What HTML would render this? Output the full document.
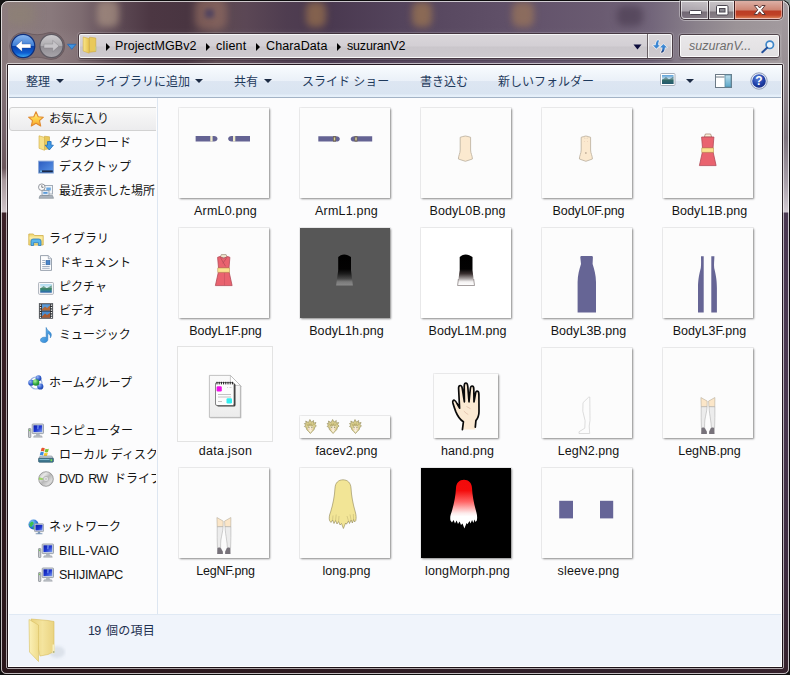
<!DOCTYPE html>
<html lang="ja">
<head>
<meta charset="utf-8">
<title>suzuranV2</title>
<style>
*{box-sizing:border-box;margin:0;padding:0}
html,body{width:790px;height:675px;overflow:hidden;background:#141414}
body{font-family:"Liberation Sans","Noto Sans CJK JP",sans-serif;font-size:12px;color:#000;position:relative}
.a{position:absolute}
.l{font-size:12.5px}
#win{position:absolute;left:0;top:0;width:790px;height:675px;overflow:hidden}
/* ---- glass frame ---- */
#glass{position:absolute;left:1px;top:1px;width:788px;height:673px;border-radius:7px 7px 5px 5px;overflow:hidden;box-shadow:0 0 0 1px #0c0c0c;
 background:linear-gradient(90deg,#8c7c7e 0,#89797c 50px,#7d6b70 80px,#66525c 105px,#594550 125px,#4c3743 150px,#493541 185px,#5d4951 215px,#5b4755 245px,#4f3d50 285px,#4a3950 330px,#54445c 400px,#5c4c64 470px,#64546c 540px,#6a5b71 600px,#72657a 650px,#8a818b 695px,#9b9397 735px,#a39b9f 100%)}
#glass .v{position:absolute;left:0;top:0;width:788px;height:64px;background:linear-gradient(180deg,rgba(255,255,255,0) 0,rgba(255,255,255,0) 26px,rgba(255,255,255,.05) 40px,rgba(255,255,255,.03) 100%)}
.blob{position:absolute;border-radius:30%;filter:blur(3.5px)}
.hl{position:absolute;background:rgba(255,255,255,.78)}
.dk{position:absolute;background:rgba(20,10,16,.72)}
/* caption buttons */
.cb{position:absolute;top:1px;height:19px;border:1px solid rgba(40,30,36,.75);border-top:none}
.cb i{position:absolute;left:0;top:0;right:0;bottom:0;border:1px solid rgba(255,255,255,.55);border-top:none;
 background:linear-gradient(180deg,rgba(255,255,255,.50) 0,rgba(255,255,255,.30) 10px,rgba(40,30,40,.20) 11px,rgba(60,50,60,.10) 100%)}
/* address */
.box{position:absolute;border:1px solid rgba(60,46,54,.8);border-radius:3px;box-shadow:0 0 0 1px rgba(255,255,255,.16),0 2px 2px rgba(20,8,16,.22)}
.box>i{position:absolute;left:0;top:0;right:0;bottom:0;border:1px solid rgba(255,255,255,.8);border-radius:2px;
 background:linear-gradient(180deg,#dad6da 0,#d3cfd4 11px,#cac6cb 12px,#cecacf 100%)}
.crumb{position:absolute;top:36.500px;height:18px;line-height:18px;font-size:12.5px;white-space:nowrap;color:#000}
.tri{position:absolute;width:0;height:0;border-top:4px solid transparent;border-bottom:4px solid transparent;border-left:4px solid #000}
/* ---- client ---- */
#client{position:absolute;left:8px;top:65px;width:774px;height:602px;background:#fcfcfd;overflow:hidden}
#edge{position:absolute;left:0;top:0;width:774px;height:602px;box-shadow:inset 1px 0 0 #fff,inset -1px 0 0 #fff,inset 0 -1px 0 #fff;pointer-events:none}
#toolbar{position:absolute;left:0;top:0;width:774px;height:33px;
 background:linear-gradient(180deg,#fdfeff 0,#f5f9fd 4px,#eaf0f8 16px,#dde6f2 16px,#d9e4f1 29px,#e4eef9 30px,#e6f0fa 32px,#a3b3c6 32px,#a3b3c6 33px);color:#1e395b}
.tb{position:absolute;top:8px;height:18px;line-height:18px;white-space:nowrap;font-size:12px;color:#1e395b}
.arr{position:absolute;top:14px;width:0;height:0;border-left:4px solid transparent;border-right:4px solid transparent;border-top:4px solid #1c2b44}
#nav{position:absolute;left:0;top:33px;width:148px;height:515px;background:#fcfcfd;overflow:hidden}
#navdiv{position:absolute;left:149px;top:33px;width:1px;height:516px;background:#dde6f1}
.ni{position:absolute;height:24px;line-height:25px;white-space:nowrap;font-size:12px;color:#141414}
.ic{position:absolute;width:16px;height:16px;overflow:visible}
#sel{position:absolute;left:1px;top:42px;width:160px;height:24px;border:1px solid #d2d2d2;border-radius:3px;background:linear-gradient(180deg,#f9f9f9 0,#ececee 100%)}
#details{position:absolute;left:0;top:549px;width:774px;height:53px;background:#f0f4fb;border-top:1px solid #e0e9f4}
/* ---- items ---- */
.th{position:absolute;background:#fcfcfc;box-shadow:0 0 0 1px rgba(0,0,0,.05),1px 1px 2px rgba(0,0,0,.42)}
.th svg{position:absolute;left:0;top:0}
.lb{position:absolute;width:131px;text-align:center;font-size:12.5px;line-height:16px;white-space:nowrap;color:#141414}
</style>
</head>
<body>
<div id="win">
<!-- ===== glass frame ===== -->
<div id="corner" class="a" style="left:783px;top:0;width:7px;height:8px;background:#8a9a97"></div>
<div id="glass"><div class="v"></div>
 <div class="blob" style="left:4px;top:2px;width:30px;height:22px;background:rgba(150,150,90,.2);filter:blur(6px)"></div>
 <div class="blob" style="left:96px;top:-1px;width:22px;height:27px;background:rgba(200,175,150,.5)"></div>
 <div class="blob" style="left:194px;top:-3px;width:32px;height:32px;background:rgba(170,125,105,.45)"></div>
 <div class="blob" style="left:204px;top:8px;width:9px;height:9px;background:rgba(50,50,100,.55);filter:blur(2px)"></div>
 <div class="blob" style="left:305px;top:1px;width:20px;height:25px;background:rgba(185,135,75,.5)"></div>
 <div class="blob" style="left:411px;top:1px;width:20px;height:25px;background:rgba(190,140,75,.5)"></div>
 <div class="blob" style="left:511px;top:1px;width:22px;height:25px;background:rgba(190,140,80,.45)"></div>
 <div class="blob" style="left:616px;top:5px;width:26px;height:20px;background:rgba(50,35,55,.38)"></div>
</div>
<!-- side / bottom glass strips -->
<div class="a" style="left:1px;top:8px;width:7px;height:660px;background:linear-gradient(180deg,#8c7c7e 0,#88787b 60px,#75636a 125px,#6b565b 160px,#a8989c 172px,#cfc4c8 204px,#3c2228 205px,#3a2026 300px,#2e1a1e 500px,#2a171b 100%)"></div>
<div class="a" style="left:782px;top:8px;width:7px;height:660px;background:linear-gradient(180deg,#a39b9f 0,#9a9196 50px,#7e747e 130px,#a9a0aa 175px,#d2cad2 204px,#4b3952 205px,#4a3850 400px,#3e2c40 560px,#36222c 100%)"></div>
<div class="a" style="left:1px;top:667px;width:788px;height:7px;border-radius:0 0 5px 5px;background:linear-gradient(90deg,#2a171b 0,#2c191f 300px,#30202a 600px,#36222c 100%)"></div>
<!-- outer highlight lines -->
<div class="a" style="left:1px;top:1px;width:788px;height:673px;border:1px solid rgba(255,255,255,.7);border-radius:7px 7px 5px 5px"></div>
<!-- inner edge of frame -->
<div class="a" style="left:6px;top:63px;width:778px;height:606px;border:1px solid rgba(255,255,255,.62);border-radius:2px"></div>
<div class="a" style="left:7px;top:64px;width:776px;height:604px;border:1px solid rgba(26,16,22,.85);border-radius:1px"></div>

<!-- caption buttons -->
<div class="a" style="left:680px;top:1px;width:103px;height:19px;border-radius:0 0 5px 5px;box-shadow:0 0 0 1px rgba(255,255,255,.35)"></div>
<div class="cb" style="left:680px;width:29px;border-radius:0 0 0 5px"><i style="border-radius:0 0 0 4px"></i>
 <svg class="a" style="left:8px;top:9px" width="14" height="6"><rect x=".5" y=".5" width="12" height="4" rx="1" fill="#fff" stroke="#4a4650"/></svg></div>
<div class="cb" style="left:708px;width:27px"><i></i>
 <svg class="a" style="left:7px;top:4px" width="14" height="12"><rect x=".5" y=".5" width="11.500" height="9.500" rx="1.200" fill="#fff" stroke="#4a4650"/><rect x="3.500" y="3.500" width="5.500" height="3.500" fill="#8a8890" stroke="#4a4650"/></svg></div>
<div class="cb" style="left:734px;width:49px;border-radius:0 0 5px 0;border-color:rgba(60,20,20,.8)"><i style="border-radius:0 0 4px 0;border-color:rgba(255,200,190,.6);background:linear-gradient(180deg,#dcb0a6 0,#cd8573 9px,#bb3c24 10px,#c04226 14px,#d87a52 100%)"></i>
 <svg class="a" style="left:17px;top:3px" width="16" height="13" viewBox="0 0 16 13"><path d="M2.300 1.500h3.200L7.700 4l2.200-2.500h3.200L9.600 5.800l3.700 4.700h-3.300L7.700 7.700 5.400 10.500H2.100l3.700-4.700z" fill="#fff" stroke="#5a3a3a" stroke-width="1" stroke-linejoin="round"/></svg></div>

<!-- back / forward -->
<svg class="a" style="left:6px;top:30px" width="74" height="34" viewBox="0 0 74 34">
 <defs>
  <linearGradient id="gb1" x1="0" y1="0" x2="0" y2="1"><stop offset="0" stop-color="#8cb8ee"/><stop offset=".48" stop-color="#3f7fd6"/><stop offset=".5" stop-color="#0b3fa8"/><stop offset=".8" stop-color="#0d5ed2"/><stop offset="1" stop-color="#3fb4f6"/></linearGradient>
  <linearGradient id="gf1" x1="0" y1="0" x2="0" y2="1"><stop offset="0" stop-color="#cfcdd0"/><stop offset=".48" stop-color="#aeacb0"/><stop offset=".5" stop-color="#8f8c92"/><stop offset="1" stop-color="#a9a6ac"/></linearGradient>
 </defs>
 <path d="M17.2 2.5c5 0 7.500 2.200 14 2.200s9-2.200 14-2.200a13.500 13.500 0 0 1 0 27c-5 0-7.500-2.200-14-2.200s-9 2.200-14 2.200a13.500 13.500 0 0 1 0-27z" fill="rgba(70,52,60,.22)" stroke="rgba(50,36,44,.28)"/>
 <circle cx="17.200" cy="16" r="11.600" fill="url(#gb1)" stroke="#0d2f7c" stroke-width="1.200"/>
 <path d="M9.800 16l6.300-5.600v3.700h8.700v3.800h-8.700v3.700z" fill="#fff" stroke="rgba(20,50,120,.45)" stroke-width=".6" stroke-linejoin="round"/>
 <circle cx="45.500" cy="16" r="11.600" fill="url(#gf1)" stroke="#5e5a62" stroke-width="1.200"/>
 <path d="M53 16l-6.300-5.600v3.700h-8.700v3.800h8.700v3.700z" fill="#c6c4c8" stroke="rgba(110,106,114,.5)" stroke-width=".6" stroke-linejoin="round"/>
 <path d="M61.500 14.300h8.500l-4.250 5z" fill="#3f93e0" stroke="#2468b8" stroke-width=".8"/>
</svg>

<!-- address bar -->
<div class="box" style="left:78px;top:33px;width:595px;height:26px"><i></i></div>
<div class="a" style="left:647px;top:34px;width:1px;height:24px;background:rgba(70,60,66,.75)"></div>
<div class="a" style="left:648px;top:35px;width:1px;height:22px;background:rgba(255,255,255,.7)"></div>
<svg class="a" style="left:82px;top:36px" width="16" height="18" viewBox="0 0 16 18">
 <defs><linearGradient id="fy" x1="0" y1="0" x2="1" y2="0"><stop offset="0" stop-color="#f9e58a"/><stop offset="1" stop-color="#e6c24e"/></linearGradient></defs>
 <path d="M7.500 1.200l6.300.8v13.500l-6.300.7z" fill="#e9c95a" stroke="#caa640" stroke-width=".6"/>
 <path d="M1.200 1l6 1.600v14.600l-6-2.200z" fill="url(#fy)" stroke="#d4b044" stroke-width=".6"/>
 <path d="M13 10.500h1.200v4.300H13z" fill="#c8cc78"/>
</svg>
<div class="tri" style="left:106px;top:43px"></div>
<div class="crumb" style="left:115px;letter-spacing:0.08px">ProjectMGBv2</div>
<div class="tri" style="left:206px;top:43px"></div>
<div class="crumb" style="left:216px;letter-spacing:0.2px">client</div>
<div class="tri" style="left:256px;top:43px"></div>
<div class="crumb" style="left:266px;letter-spacing:0.12px">CharaData</div>
<div class="tri" style="left:337px;top:43px"></div>
<div class="crumb" style="left:347px;letter-spacing:-0.17px">suzuranV2</div>
<svg class="a" style="left:633px;top:44px" width="10" height="6"><path d="M.5.500h8l-4 5z" fill="#0c0c3c"/></svg>
<svg class="a" style="left:652px;top:39px" width="16" height="15" viewBox="0 0 16 15">
 <defs><linearGradient id="rf" x1="0" y1="0" x2="0" y2="1"><stop offset="0" stop-color="#4a96dc"/><stop offset=".6" stop-color="#2f74c4"/><stop offset="1" stop-color="#16265e"/></linearGradient></defs>
 <g stroke="rgba(255,255,255,.75)" stroke-width="1.300" stroke-linejoin="round" fill="rgba(255,255,255,.75)">
  <path d="M1 6.200H7.800L4.400 9.800zM3.600 6.300C3.800 4 4.500 2 5.600 1.200L7.200 1.600C6.400 2.600 6.200 4.500 6.300 6.300z"/>
  <path d="M11.400 5.100L15 8.500H8zM10.400 8.400C10.400 10.500 10 12.300 8.600 13.300L10 13.800C11.800 13 12.800 11 12.900 8.400z"/>
 </g>
 <path d="M1 6.200H7.800L4.400 9.800zM3.600 6.300C3.800 4 4.500 2 5.600 1.200L7.200 1.600C6.400 2.600 6.200 4.500 6.300 6.300z" fill="#3c86d2"/>
 <path d="M11.400 5.100L15 8.500H8zM10.400 8.400C10.400 10.500 10 12.300 8.600 13.300L10 13.800C11.800 13 12.800 11 12.900 8.400z" fill="url(#rf)"/>
</svg>
<!-- search box -->
<div class="box" style="left:679px;top:34px;width:101px;height:24px"><i style="background:linear-gradient(180deg,#e9e7e9 0,#e2e0e2 100%)"></i></div>
<div class="a l" style="left:689px;top:37px;height:18px;line-height:18px;font-style:italic;color:#6d6d6d;white-space:nowrap">suzuranV...</div>
<svg class="a" style="left:760px;top:39px" width="16" height="16" viewBox="0 0 16 16">
 <circle cx="9.800" cy="5.800" r="3.700" fill="#eef4fb" stroke="#3f86c8" stroke-width="1.700"/>
 <path d="M7 8.700L2.300 13.300" stroke="#24509a" stroke-width="2" stroke-linecap="round"/>
</svg>
<div id="client">
<!-- ===== command bar (coords relative to client: x-8, y-65) ===== -->
<div id="toolbar">
 <div class="tb" style="left:18px">整理</div><div class="arr" style="left:48px"></div>
 <div class="tb" style="left:86px">ライブラリに追加</div><div class="arr" style="left:187px"></div>
 <div class="tb" style="left:226px">共有</div><div class="arr" style="left:256px"></div>
 <div class="tb" style="left:294px">スライド ショー</div>
 <div class="tb" style="left:412px">書き込む</div>
 <div class="tb" style="left:490px">新しいフォルダー</div>
 <!-- view icon -->
 <svg class="a" style="left:652px;top:8px" width="16" height="14" viewBox="0 0 16 14">
  <defs><linearGradient id="vw" x1="0" y1="0" x2="0" y2="1"><stop offset="0" stop-color="#5aa0d8"/><stop offset=".45" stop-color="#cfe4ee"/><stop offset=".55" stop-color="#3f7f78"/><stop offset="1" stop-color="#1f5a8a"/></linearGradient></defs>
  <rect x=".5" y=".5" width="14.500" height="12" rx="1" fill="#fff" stroke="#a8b0bc"/>
  <rect x="2" y="2" width="11.500" height="9" fill="url(#vw)"/>
  <path d="M2 7l4-3 3 2.500 4.500-3V11H2z" fill="rgba(40,90,90,.55)"/>
 </svg>
 <div class="arr" style="left:678px"></div>
 <!-- preview pane icon -->
 <svg class="a" style="left:707px;top:8px" width="18" height="16" viewBox="0 0 18 16">
  <defs><linearGradient id="pp" x1="0" y1="0" x2="0" y2="1"><stop offset="0" stop-color="#bfe0ee"/><stop offset="1" stop-color="#5aa6c8"/></linearGradient></defs>
  <rect x=".5" y="1.500" width="16" height="13" fill="#fff" stroke="#6c7a86"/>
  <path d="M.5 4h9" stroke="#6c7a86"/>
  <rect x="10" y="2" width="6" height="12" fill="url(#pp)" stroke="#5a8aa0" stroke-width=".8"/>
 </svg>
 <!-- help icon -->
 <svg class="a" style="left:742px;top:7px" width="18" height="18" viewBox="0 0 18 18">
  <defs><radialGradient id="hp" cx=".4" cy=".3" r=".8"><stop offset="0" stop-color="#5a7fd8"/><stop offset=".6" stop-color="#1f3fa8"/><stop offset="1" stop-color="#14287a"/></radialGradient></defs>
  <circle cx="9" cy="9" r="8.200" fill="#e8eef8" stroke="#7a86a8" stroke-width=".8"/>
  <circle cx="9" cy="9" r="6.800" fill="url(#hp)"/>
  <text x="9" y="13.300" text-anchor="middle" font-family="Liberation Sans,sans-serif" font-weight="bold" font-size="12" fill="#fff">?</text>
 </svg>
</div>
<!-- ===== navigation pane (origin: page 8,97) ===== -->
<div id="nav">
<div id="sel" style="left:1px;top:9px"></div>
<svg class="ic" style="left:20px;top:13px" viewBox="0 0 16 16"><defs><linearGradient id="st" x1="0" y1="0" x2="0" y2="1"><stop offset="0" stop-color="#fff3a0"/><stop offset=".5" stop-color="#ffd24a"/><stop offset="1" stop-color="#f6a42c"/></linearGradient></defs><path d="M8 .8l2.200 4.900 5.200.5-3.900 3.500 1.200 5.300L8 12.300 3.300 15l1.200-5.300L.6 6.200l5.200-.5z" fill="url(#st)" stroke="#e08a30" stroke-width="1.100" stroke-linejoin="round"/></svg>
<div class="ni" style="left:41px;top:9px">お気に入り</div>
<svg class="ic" style="left:30px;top:37px" viewBox="0 0 16 16"><path d="M6.500 1.200l5 .6v12l-5 .8z" fill="#e8c85a" stroke="#c8a43c" stroke-width=".6"/><path d="M1 .8l5.500 1.500v13l-5.500-2z" fill="#f6e08a" stroke="#d0ac44" stroke-width=".6"/><path d="M9.500 6.500h3.600v3.700h2.300l-4.100 4.800-4.100-4.800h2.300z" fill="#3f9ae8" stroke="#1f6ab8" stroke-width=".8" stroke-linejoin="round"/></svg>
<div class="ni" style="left:51px;top:33px">ダウンロード</div>
<svg class="ic" style="left:30px;top:61px" viewBox="0 0 16 16"><defs><linearGradient id="dk" x1="0" y1="0" x2="1" y2="1"><stop offset="0" stop-color="#2c5cc0"/><stop offset="1" stop-color="#5a96e8"/></linearGradient></defs><rect x=".6" y="2.100" width="14.800" height="12" fill="url(#dk)" stroke="#8aa8d8" stroke-width=".9"/><rect x="1.200" y="11.400" width="13.600" height="1.900" fill="#1a2a4a"/><rect x="1.600" y="11.300" width="2.400" height="1.900" fill="#6ab0e8"/></svg>
<div class="ni" style="left:51px;top:57px">デスクトップ</div>
<svg class="ic" style="left:30px;top:85px" viewBox="0 0 16 16"><rect x="6.500" y="2.500" width="8" height="8.500" fill="#f2f5f9" stroke="#9aa4b0" stroke-width=".9"/><rect x="8.300" y="4.500" width="4.500" height="3" fill="#6aa8e0"/><rect x="4" y="7.500" width="7" height="5" fill="#dfe8f2" stroke="#8a98a8" stroke-width=".8"/><rect x="5.300" y="9" width="4.200" height="1.800" fill="#5a9ad8"/><path d="M2 12.500h12.500l1 2.800H1z" fill="#aab2bc" stroke="#7c8690" stroke-width=".6"/><circle cx="3.800" cy="4.200" r="3.300" fill="#fafafa" stroke="#8a8e96" stroke-width=".9"/><path d="M3.800 2.200v2.100h1.700" stroke="#5a5e66" stroke-width=".8" fill="none"/></svg>
<div class="ni" style="left:51px;top:81px">最近表示した場所</div>
<svg class="ic" style="left:20px;top:133px" viewBox="0 0 16 16"><path d="M.8 3h4.500l1.200 1.500h8.700V14H.8z" fill="#f3dc7c" stroke="#cfae4a" stroke-width=".8"/><path d="M1.500 5.500h13v3h-13z" fill="#f9eaa0"/><path d="M3 14.500V10.200a2.200 2.200 0 0 1 2.200-2.200h5.600a2.200 2.200 0 0 1 2.200 2.200v4.300h-2.600v-2.800H5.600v2.800z" fill="#58b4ec" stroke="#2a7cc0" stroke-width=".8"/></svg>
<div class="ni" style="left:41px;top:129px">ライブラリ</div>
<svg class="ic" style="left:30px;top:157px" viewBox="0 0 16 16"><path d="M2.500.6h7.800l3.200 3.200v11.600h-11z" fill="#fdfdfe" stroke="#8e98a6" stroke-width=".9"/><path d="M10.300.6v3.200h3.200" fill="#e6eaf0" stroke="#8e98a6" stroke-width=".7"/><path d="M4.200 5.500h3M4.200 7.500h3M4.200 9.500h3M4.200 11.500h7.500M4.200 13.300h7.500" stroke="#9aa8bc" stroke-width=".9"/><rect x="8" y="5.300" width="4" height="4.500" fill="#4a84c8" stroke="#2c5c98" stroke-width=".5"/></svg>
<div class="ni" style="left:51px;top:153px">ドキュメント</div>
<svg class="ic" style="left:30px;top:181px" viewBox="0 0 16 16"><defs><linearGradient id="pc" x1="0" y1="0" x2="0" y2="1"><stop offset="0" stop-color="#a8d8f0"/><stop offset=".4" stop-color="#dff0f4"/><stop offset=".55" stop-color="#3f8f6a"/><stop offset=".8" stop-color="#2f7c9a"/><stop offset="1" stop-color="#2a5ea8"/></linearGradient></defs><rect x=".6" y="3.500" width="14.800" height="11.800" rx=".8" fill="#fbfbfc" stroke="#a2a8b2" stroke-width=".9"/><rect x="2.200" y="5.100" width="11.600" height="8.600" fill="url(#pc)"/><path d="M2.200 9.500l3.500-2.500 3 2.200 5.100-3v4H2.200z" fill="rgba(40,110,80,.6)"/></svg>
<div class="ni" style="left:51px;top:177px">ピクチャ</div>
<svg class="ic" style="left:30px;top:205px" viewBox="0 0 16 16"><rect x="1.200" y=".5" width="13.600" height="15" fill="#2a2c30" stroke="#55585e" stroke-width=".6"/><rect x="4" y="1.200" width="8" height="6.300" fill="#5a9ad8"/><rect x="4" y="8.500" width="8" height="6.300" fill="#4a8cd0"/><path d="M4 6l3-2.500 2 1.500 3-2.500v5H4z" fill="#b0683a"/><path d="M4 13.500l3-3 2 1.500 3-2v4.800H4z" fill="#a85a30"/><g fill="#f2f2f2"><rect x="1.900" y="1.500" width="1.300" height="1.300"/><rect x="1.900" y="4" width="1.300" height="1.300"/><rect x="1.900" y="6.500" width="1.300" height="1.300"/><rect x="1.900" y="9" width="1.300" height="1.300"/><rect x="1.900" y="11.500" width="1.300" height="1.300"/><rect x="1.900" y="13.700" width="1.300" height="1.300"/><rect x="12.800" y="1.500" width="1.300" height="1.300"/><rect x="12.800" y="4" width="1.300" height="1.300"/><rect x="12.800" y="6.500" width="1.300" height="1.300"/><rect x="12.800" y="9" width="1.300" height="1.300"/><rect x="12.800" y="11.500" width="1.300" height="1.300"/><rect x="12.800" y="13.700" width="1.300" height="1.300"/></g></svg>
<div class="ni" style="left:51px;top:201px">ビデオ</div>
<svg class="ic" style="left:30px;top:229px" viewBox="0 0 16 16"><defs><linearGradient id="mu" x1="0" y1="0" x2="1" y2="1"><stop offset="0" stop-color="#7cc4f4"/><stop offset="1" stop-color="#1f7cd0"/></linearGradient></defs><path d="M8.200.5c.6 2.400 2.100 3.200 3.700 4.500 1.800 1.500 1.800 4 .4 5.800.4-2-.3-3.500-2.500-4.500v6.200c0 1.900-1.700 3.100-3.900 3.100-2 0-3.400-1-3.400-2.500 0-1.700 1.700-2.900 3.700-2.900.7 0 1.400.2 2 .4z" fill="url(#mu)" stroke="#2a78c0" stroke-width=".6"/></svg>
<div class="ni" style="left:51px;top:225px">ミュージック</div>
<svg class="ic" style="left:20px;top:277px" viewBox="0 0 16 16"><defs><radialGradient id="hb" cx=".35" cy=".3" r=".8"><stop offset="0" stop-color="#9ab8f4"/><stop offset=".6" stop-color="#2f5ccc"/><stop offset="1" stop-color="#1a3a9a"/></radialGradient><radialGradient id="hg" cx=".35" cy=".3" r=".8"><stop offset="0" stop-color="#b0f0a0"/><stop offset=".6" stop-color="#2fa83c"/><stop offset="1" stop-color="#167a28"/></radialGradient></defs><circle cx="8" cy="8" r="6" fill="none" stroke="#9ab4e0" stroke-width="1.200"/><circle cx="10.500" cy="3.200" r="2.900" fill="url(#hb)"/><circle cx="3.200" cy="7.800" r="3" fill="url(#hb)"/><circle cx="12.300" cy="11.500" r="3.100" fill="url(#hb)"/><circle cx="8" cy="7.500" r="3.300" fill="url(#hg)"/></svg>
<div class="ni" style="left:41px;top:273px">ホームグループ</div>
<svg class="ic" style="left:20px;top:325px" viewBox="0 0 16 16"><defs><linearGradient id="cs" x1="0" y1="0" x2="1" y2="1"><stop offset="0" stop-color="#0c1ca8"/><stop offset=".5" stop-color="#2038d0"/><stop offset="1" stop-color="#7c9cf0"/></linearGradient></defs><rect x=".5" y="5.500" width="2.300" height="9" rx=".6" fill="#c8ccd0" stroke="#7c8288" stroke-width=".7"/><rect x="1.200" y="6.500" width=".9" height="1.600" fill="#6ac040"/><rect x="4.200" y="1" width="11.300" height="9.600" rx=".8" fill="#d2d8e0" stroke="#8a929c" stroke-width=".8"/><rect x="5.500" y="2.300" width="8.700" height="6.800" fill="url(#cs)"/><path d="M9 2.300h2.200l-.7 4H9z" fill="rgba(150,180,250,.55)"/><path d="M8.300 10.800h3.200l.6 2h-4.400z" fill="#b0b6be"/><path d="M6.300 12.800h7.200l.8 1.400H5.500z" fill="#c8ccd2" stroke="#8a9098" stroke-width=".5"/></svg>
<div class="ni" style="left:41px;top:321px">コンピューター</div>
<svg class="ic" style="left:30px;top:349px" viewBox="0 0 16 16"><path d="M3.500 1.200c1.200-.7 2.300-.5 3.300.1l-.8 3.300c-1-.6-2.100-.7-3.300-.1z" fill="#e8542c"/><path d="M7.500 1.700c1 .6 2.100.7 3.300.1l-.8 3.300c-1.200.6-2.300.5-3.300-.1z" fill="#7cc030"/><path d="M2.500 5.200c1.200-.6 2.300-.5 3.300.1L5 8.500c-1-.6-2.100-.7-3.300-.1z" fill="#3c8ce0"/><path d="M6.500 5.700c1 .6 2.100.7 3.300.1L9 9c-1.200.6-2.300.5-3.300-.1z" fill="#f8c828"/><path d="M2.200 9l-1.600 2.500h14.800L13.800 9z" fill="#c8d0d8" stroke="#7c8894" stroke-width=".6"/><rect x=".6" y="11.200" width="14.800" height="4" rx=".8" fill="#3f7890" stroke="#2c566c" stroke-width=".7"/><rect x="1.500" y="12" width="10" height=".9" fill="#8ac0d4"/><rect x="12.600" y="12.200" width="1.500" height="2" fill="#7ce04a"/></svg>
<div class="ni" style="left:51px;top:345px">ローカル<span style="margin-left:3.800px">ディスク (C:)</span></div>
<svg class="ic" style="left:30px;top:373px" viewBox="0 0 16 16"><defs><linearGradient id="dv" x1="0" y1="0" x2="1" y2="1"><stop offset="0" stop-color="#a8a8a8"/><stop offset=".3" stop-color="#e8e8e8"/><stop offset=".5" stop-color="#b8b8b8"/><stop offset=".75" stop-color="#dcdcdc"/><stop offset="1" stop-color="#8c8c8c"/></linearGradient></defs><circle cx="8" cy="8" r="7.300" fill="url(#dv)" stroke="#808080" stroke-width=".7"/><path d="M1.200 6.200l3.800 1-.2 1.700-4-.2z" fill="#8cd048" opacity=".8"/><circle cx="8" cy="8" r="2.600" fill="#ececec" stroke="#a0a0a0" stroke-width=".6"/><circle cx="8" cy="8" r="1" fill="#fff" stroke="#909090" stroke-width=".5"/></svg>
<div class="ni" style="left:51px;top:369px"><span class="l" style="letter-spacing:-.8px;word-spacing:2.700px">DVD RW</span><span style="margin-left:6.500px">ドライブ (D:)</span></div>
<svg class="ic" style="left:20px;top:421px" viewBox="0 0 16 16"><defs><radialGradient id="gl" cx=".35" cy=".3" r=".8"><stop offset="0" stop-color="#8cd0f8"/><stop offset=".6" stop-color="#2a74d8"/><stop offset="1" stop-color="#1a48a8"/></radialGradient><linearGradient id="ns" x1="0" y1="0" x2="1" y2="1"><stop offset="0" stop-color="#0c1ca8"/><stop offset=".6" stop-color="#2038d0"/><stop offset="1" stop-color="#7c9cf0"/></linearGradient></defs><circle cx="5.500" cy="5.500" r="5" fill="url(#gl)"/><path d="M2.500 3.500c1.500-1.800 3-.8 3.200.8.200 1.500-1.600 1.600-1.800 3-.2 1.200-1.800.5-2.400-.8-.4-1 .2-2.200 1-3zM5.500 8c1-.6 2.400-.2 2.200 1.200-.1.800-1.200 1.200-2 .8-.7-.4-.9-1.500-.2-2z" fill="#3cc050"/><rect x="6.500" y="4.800" width="9" height="7.800" rx=".6" fill="#d2d8e0" stroke="#8a929c" stroke-width=".7"/><rect x="7.500" y="5.800" width="7" height="5.600" fill="url(#ns)"/><path d="M10 12.700h2l.4 1.500h2v1H7.700v-1h1.900z" fill="#7c98b8"/></svg>
<div class="ni" style="left:41px;top:417px">ネットワーク</div>
<svg class="ic" style="left:30px;top:445px" viewBox="0 0 16 16"><rect x=".5" y="5.500" width="2.300" height="9" rx=".6" fill="#c8ccd0" stroke="#7c8288" stroke-width=".7"/><rect x="1.200" y="6.500" width=".9" height="1.600" fill="#6ac040"/><rect x="4.200" y="1" width="11.300" height="9.600" rx=".8" fill="#d2d8e0" stroke="#8a929c" stroke-width=".8"/><rect x="5.500" y="2.300" width="8.700" height="6.800" fill="url(#cs)"/><path d="M9 2.300h2.200l-.7 4H9z" fill="rgba(150,180,250,.55)"/><path d="M8.300 10.800h3.200l.6 2h-4.400z" fill="#b0b6be"/><path d="M6.300 12.800h7.200l.8 1.400H5.500z" fill="#c8ccd2" stroke="#8a9098" stroke-width=".5"/></svg>
<div class="ni" style="left:51px;top:441px"><span class="l" style="letter-spacing:.15px">BILL-VAIO</span></div>
<svg class="ic" style="left:30px;top:469px" viewBox="0 0 16 16"><rect x=".5" y="5.500" width="2.300" height="9" rx=".6" fill="#c8ccd0" stroke="#7c8288" stroke-width=".7"/><rect x="1.200" y="6.500" width=".9" height="1.600" fill="#6ac040"/><rect x="4.200" y="1" width="11.300" height="9.600" rx=".8" fill="#d2d8e0" stroke="#8a929c" stroke-width=".8"/><rect x="5.500" y="2.300" width="8.700" height="6.800" fill="url(#cs)"/><path d="M9 2.300h2.200l-.7 4H9z" fill="rgba(150,180,250,.55)"/><path d="M8.300 10.800h3.200l.6 2h-4.400z" fill="#b0b6be"/><path d="M6.300 12.800h7.200l.8 1.400H5.500z" fill="#c8ccd2" stroke="#8a9098" stroke-width=".5"/></svg>
<div class="ni" style="left:51px;top:465px"><span class="l" style="letter-spacing:-.29px">SHIJIMAPC</span></div>
</div>
<div id="navdiv"></div>
<!-- ===== file items ===== -->
<div id="items">
<div class="th" style="left:171px;top:43px;width:90px;height:90px;"><svg width="90" height="90" viewBox="0 0 90 90"><path d="M16.600 28h18.400c2 0 3.500 1.200 3.500 2.800s-1.500 2.800-3.500 2.800H16.600z" fill="#646393"/><rect x="31.300" y="28" width="2.300" height="5.600" fill="#efeccc"/>
<path d="M71 28H52.600c-2 0-3.500 1.200-3.500 2.800s1.500 2.800 3.500 2.800H71z" fill="#646393"/><rect x="54" y="28" width="2.300" height="5.600" fill="#efeccc"/></svg></div>
<div class="lb" style="left:152px;top:138px;letter-spacing:0.21px">ArmL0.png</div>
<div class="th" style="left:292px;top:43px;width:90px;height:90px;"><svg width="90" height="90" viewBox="0 0 90 90"><path d="M18.300 28.200h18c2 0 3.500 1.200 3.500 2.700s-1.500 2.700-3.500 2.700h-18z" fill="#646393"/><rect x="33" y="28.200" width="3" height="5.400" fill="#6e6450"/><rect x="33.800" y="29.400" width="1.400" height="3" fill="#d8cfa0"/>
<path d="M72.200 28.200h-18c-2 0-3.500 1.200-3.500 2.700s1.500 2.700 3.500 2.700h18z" fill="#646393"/><rect x="54.500" y="28.200" width="3" height="5.400" fill="#6e6450"/><rect x="55.300" y="29.400" width="1.400" height="3" fill="#d8cfa0"/></svg></div>
<div class="lb" style="left:273px;top:138px;letter-spacing:0.21px">ArmL1.png</div>
<div class="th" style="left:413px;top:43px;width:90px;height:90px;"><svg width="90" height="90" viewBox="0 0 90 90"><path d="M39.200 29.300c1.800-.3 3.200-1.300 5.200-1.300s3.400 1 5.200 1.300V42c0 3.500 1.800 5.500 1.800 9l-7 2.300-7-2.300c0-3.500 1.800-5.500 1.800-9z" fill="#fbe9cf" stroke="#b9ad9c" stroke-width=".8"/></svg></div>
<div class="lb" style="left:394px;top:138px;letter-spacing:0.09px">BodyL0B.png</div>
<div class="th" style="left:534px;top:43px;width:90px;height:90px;"><svg width="90" height="90" viewBox="0 0 90 90"><path d="M39.200 29.300c1.800-.3 3-1.300 4.700-1.300s2.900 1 4.700 1.300V42c0 3.500 1.800 5.500 1.800 9l-6.500 2.300-6.500-2.300c0-3.500 1.800-5.500 1.800-9z" fill="#fbe9cf" stroke="#b9ad9c" stroke-width=".8"/><path d="M42 29.500l1 1.200M46 29.500l-1 1.200" stroke="#b9ad9c" stroke-width=".5"/><path d="M43.900 44v2" stroke="#a08c78" stroke-width=".8"/><circle cx="42.300" cy="33.300" r=".4" fill="#d8b8a0"/><circle cx="45.600" cy="33.300" r=".4" fill="#d8b8a0"/></svg></div>
<div class="lb" style="left:515px;top:138px;letter-spacing:-0.1px">BodyL0F.png</div>
<div class="th" style="left:655px;top:43px;width:90px;height:90px;"><svg width="90" height="90" viewBox="0 0 90 90"><path d="M41.300 29l1.100-3h5.200l1.100 3z" fill="#fbf0d8" stroke="#a07868" stroke-width=".7" stroke-linejoin="round"/>
<path d="M38.600 29h12.300l-.9 11h-10.500z" fill="#e9636f" stroke="#b24a58" stroke-width=".8"/>
<path d="M39.400 44h10.700l3 13.600H36.400z" fill="#e9636f" stroke="#b24a58" stroke-width=".8"/>
<rect x="38.800" y="40" width="11.900" height="4.200" fill="#fbe28e" stroke="#c29a5a" stroke-width=".6"/></svg></div>
<div class="lb" style="left:636px;top:138px;letter-spacing:0.04px">BodyL1B.png</div>
<div class="th" style="left:171px;top:163px;width:90px;height:90px;"><svg width="90" height="90" viewBox="0 0 90 90"><path d="M41 29.600l1.300-3h4.800l1.300 3z" fill="#efe4cc" stroke="#8a7868" stroke-width=".6"/>
<path d="M38.600 29.300l2.400-.8 3.700 2 3.700-2 2.500.8-.9 10.700h-10.500z" fill="#e9636f" stroke="#b24a58" stroke-width=".8"/>
<path d="M41.300 29.300l5.200 9M48 29.300l-4.200 6" stroke="#b24a58" stroke-width=".7" fill="none"/>
<path d="M39.400 44h10.700l3 13.600H36.400z" fill="#e9636f" stroke="#b24a58" stroke-width=".8"/>
<path d="M45.500 44.500v12.800" stroke="#c8505e" stroke-width=".6"/>
<rect x="38.800" y="40" width="11.900" height="4.200" fill="#fbe28e" stroke="#c29a5a" stroke-width=".6"/></svg></div>
<div class="lb" style="left:152px;top:258px;letter-spacing:-0.04px">BodyL1F.png</div>
<div class="th" style="left:292px;top:163px;width:90px;height:90px;background:#575757;"><svg width="90" height="90" viewBox="0 0 90 90"><defs><linearGradient id="sh" x1="0" y1="26.500" x2="0" y2="57.500" gradientUnits="userSpaceOnUse"><stop offset="0" stop-color="#000"/><stop offset=".47" stop-color="#030202"/><stop offset=".62" stop-color="#1c1c1c"/><stop offset=".78" stop-color="#484848"/><stop offset=".88" stop-color="#7a7a7a"/><stop offset="1" stop-color="#8a8a8a"/></linearGradient></defs>
<path d="M40.700 27.300q3.500-1.600 7.100 0l3.200 1.800v13.100l1.900 15.300H36.100l2.100-15.300V29.100z" fill="url(#sh)"/></svg></div>
<div class="lb" style="left:273px;top:258px;letter-spacing:0.09px">BodyL1h.png</div>
<div class="th" style="left:413px;top:163px;width:90px;height:90px;background:#fff;"><svg width="90" height="90" viewBox="0 0 90 90"><defs><linearGradient id="sm" x1="0" y1="26.500" x2="0" y2="57.500" gradientUnits="userSpaceOnUse"><stop offset="0" stop-color="#000"/><stop offset=".47" stop-color="#030202"/><stop offset=".62" stop-color="#3a3030"/><stop offset=".78" stop-color="#a8a2a2"/><stop offset=".88" stop-color="#f4f2f2"/><stop offset="1" stop-color="#fff"/></linearGradient></defs>
<path d="M41.200 27.300q3.500-1.600 7.100 0l3.200 1.800v13.100l1.900 15.300H36.600l2.100-15.300V29.100z" fill="url(#sm)"/><path d="M37.400 51l-.8 6.500h16.900l-.8-6.500" fill="none" stroke="#6a6060" stroke-width=".6"/></svg></div>
<div class="lb" style="left:394px;top:258px;letter-spacing:0.08px">BodyL1M.png</div>
<div class="th" style="left:534px;top:163px;width:90px;height:90px;"><svg width="90" height="90" viewBox="0 0 90 90"><path d="M38.300 29.300c0-.9.600-1.300 1.500-1.300h9.600c.9 0 1.500.4 1.500 1.300l-.3 6.700c1.800 5.500 3.300 11 3.400 18V84.500H35.600V54c.1-7 1.600-12.500 3.400-18z" fill="#666595"/></svg></div>
<div class="lb" style="left:515px;top:258px;letter-spacing:0.04px">BodyL3B.png</div>
<div class="th" style="left:655px;top:163px;width:90px;height:90px;"><svg width="90" height="90" viewBox="0 0 90 90"><path d="M38 28.300h2.700V84.500h-5.700V60c0-9 1.500-15 2.800-20 .5-4 .2-8 .2-11.700z" fill="#666595"/>
<path d="M51.400 28.300h-3.100V84.500h5.600V60c0-9-1.500-15-2.700-20-.5-4 .2-8 .2-11.700z" fill="#666595"/></svg></div>
<div class="lb" style="left:636px;top:258px;letter-spacing:0.06px">BodyL3F.png</div>
<div class="a" style="left:169px;top:281px;width:96px;height:96px;border:1px solid #e3e3e3;background:#fdfdfd"><svg class="a" style="left:-1px;top:-1px" width="96" height="96" viewBox="0 0 96 96"><defs><linearGradient id="pg" x1="0" y1="0" x2="0" y2="1"><stop offset="0" stop-color="#fafafa"/><stop offset="1" stop-color="#ececec"/></linearGradient></defs>
<path d="M32.400 29.400h21l10 10v32h-31z" fill="rgba(0,0,0,.28)" transform="translate(.9,.9)"/>
<path d="M32.400 29.400h21l10 10v32h-31z" fill="url(#pg)" stroke="#b4b4b4" stroke-width=".8"/>
<path d="M53.400 29.400v10h10z" fill="#fff" stroke="#b4b4b4" stroke-width=".7"/>
<rect x="40" y="37.600" width="18.500" height="23" rx="1.500" fill="#3c3c3c"/>
<rect x="38.500" y="36.500" width="18.500" height="23" rx="1.500" fill="#fcfcfc" stroke="#555" stroke-width=".7"/>
<path d="M40 35.800v2.600M42.200 35.800v2.600M44.400 35.800v2.600M46.600 35.800v2.600M48.800 35.800v2.600M51 35.800v2.600M53.200 35.800v2.600M55.400 35.800v2.600" stroke="#1a1a1a" stroke-width="1"/>
<rect x="39.600" y="40.300" width="5.200" height="5.200" rx="1.200" fill="#f010e8"/>
<rect x="49.500" y="52.300" width="5.500" height="5.200" rx="1.200" fill="#30eef0"/>
<path d="M41 48.500h13M41 51h13M41 55.500h4" stroke="#c2c2c2" stroke-width="1.100"/><path d="M50 41.500h1M52.500 41.500h2" stroke="#c8c8c8" stroke-width=".8"/></svg></div>
<div class="lb" style="left:152px;top:378px;letter-spacing:0.32px">data.json</div>
<div class="th" style="left:292px;top:351px;width:90px;height:22px;"><svg width="90" height="22" viewBox="0 0 90 22"><defs><g id="fc"><path d="M-6 4l1.800-.3-.5-2.200L-2 3-.5 0 1 2.600 3.200 1 3 3.600l2.600-.6-1 2.200L6 6.600 4.500 7.600 3.600 10.200 1.600 12.200 0 14l-1.600-1.800-2-2-0.900-2.600L-6 7l1.200-1.400z" fill="#d9cd8c" stroke="#8f8658" stroke-width=".6" stroke-linejoin="round"/><path d="M-2.700 6.600c1.700-.7 3.700-.7 5.400 0l-.7 3.800L0 13.300l-2-2.900z" fill="#f7efd8"/><path d="M-2.300 7.600l1.500.6M2.300 7.600l-1.500.6" stroke="#7a7048" stroke-width=".7"/><path d="M-1.800 9.700h.9M.9 9.700h.9" stroke="#e8a898" stroke-width=".8"/><path d="M-3.500 4.500l1.500 2.500.7-2.800.9 2.600 1-2.700.8 2.800 1.800-2.400" stroke="#a89c60" stroke-width=".6" fill="none"/></g></defs><use href="#fc" transform="translate(10.400,3.500)"/><use href="#fc" transform="translate(33.100,3.500)"/><use href="#fc" transform="translate(55.500,3.500)"/></svg></div>
<div class="lb" style="left:273px;top:378px;letter-spacing:0.09px">facev2.png</div>
<div class="th" style="left:426px;top:309px;width:64px;height:64px;"><svg width="64" height="64" viewBox="0 0 64 64"><path d="M28.400 55.600L29.400 47.800C26 45.500 23.500 42 21.800 37.600C20.500 34 19.300 31 18.800 28.500C18.500 26.800 19.300 26 20.300 26.200C21.500 26.500 22.300 28 23 29.500L25.600 34.200L24.600 14.500C24.500 12.500 25.200 11.500 26.300 11.500C27.400 11.500 28 12.500 28.300 14.500L30.400 27.800L30.200 12.500C30.200 10.200 30.900 9 31.900 9C33 9 33.600 10.200 33.800 12.500L35 27.800L36.300 15C36.500 13 37.200 11.900 38.200 12C39.300 12.100 39.800 13.200 39.800 15.200L40 27.800L41.500 19.500C41.800 17.800 42.500 16.900 43.400 17.100C44.500 17.300 44.900 18.500 44.900 20.500L45 37.600C45 41.500 43.800 44.500 41.900 46.600L41.300 53.200L41.300 55.600z" fill="#fbe9d2"/><path d="M28.400 55.600L29.400 47.800C26 45.500 23.500 42 21.800 37.600C20.500 34 19.300 31 18.800 28.500C18.500 26.800 19.300 26 20.300 26.200C21.500 26.500 22.300 28 23 29.500L25.600 34.200L24.600 14.500C24.500 12.500 25.200 11.500 26.300 11.500C27.400 11.500 28 12.500 28.300 14.500L30.400 27.800L30.200 12.500C30.200 10.200 30.900 9 31.900 9C33 9 33.600 10.200 33.800 12.500L35 27.800L36.300 15C36.500 13 37.200 11.900 38.200 12C39.300 12.100 39.800 13.200 39.800 15.200L40 27.800L41.500 19.500C41.800 17.800 42.500 16.900 43.400 17.100C44.500 17.300 44.900 18.500 44.900 20.500L45 37.600C45 41.500 43.800 44.500 41.900 46.600L41.300 53.200" fill="none" stroke="#0a0a0a" stroke-width="1.700" stroke-linejoin="round" stroke-linecap="round"/><path d="M32.500 32.500l4 2.200M29.800 37c1.500 1.600 3 2.800 4.500 3.600" stroke="#dcb8a4" stroke-width=".7" fill="none"/></svg></div>
<div class="lb" style="left:394px;top:378px;letter-spacing:0.11px">hand.png</div>
<div class="th" style="left:534px;top:283px;width:90px;height:90px;"><svg width="90" height="90" viewBox="0 0 90 90"><path d="M46.500 49.300l1.300-.3.200 23.500-.8 5.500.5 7.500H37l.1-1.800 5.700-3.500.3-7.500-2.300-9.500.2-8.500z" fill="none" stroke="#cfcfcf" stroke-width=".7"/></svg></div>
<div class="lb" style="left:515px;top:378px;letter-spacing:0.05px">LegN2.png</div>
<div class="th" style="left:655px;top:283px;width:90px;height:90px;"><svg width="90" height="90" viewBox="0 0 90 90"><path d="M37.900 49.500l6.300 3.600-.1 5.600-5.900.2z" fill="#fbe6c8" stroke="#a8a090" stroke-width=".5"/><path d="M51.900 49.500l-6.300 3.600.3 5.600 5.900.2z" fill="#fbe6c8" stroke="#a8a090" stroke-width=".5"/>
<path d="M38.200 58.800l5.900-.1c-.3 5-1.600 9-2.200 13.300-.3 2.500-.3 5-.3 8l-3.200.1c-.3-7.500-.3-14.300-.2-21.300z" fill="#ececec" stroke="#a4a4a4" stroke-width=".5"/><path d="M46 58.700l5.900.1c.1 7 0 13.800-.3 21.300l-3.200-.1c-.2-3-.4-5.500-.8-8-.6-4.300-1.400-8.300-1.600-13.300z" fill="#ececec" stroke="#a4a4a4" stroke-width=".5"/>
<path d="M38.300 80.300c1-1 3-1 3.800.2l1.800 3.300v2.300h-5.700z" fill="#77727a"/><path d="M51.400 80.300c-1-1-3-1-3.800.2l-1.500 3.300v2.300h5.400z" fill="#77727a"/></svg></div>
<div class="lb" style="left:636px;top:378px">LegNB.png</div>
<div class="th" style="left:171px;top:403px;width:90px;height:90px;"><svg width="90" height="90" viewBox="0 0 90 90"><path d="M37.900 49.500l6.300 3.600-.1 5.600-5.900.2z" fill="#fbe6c8" stroke="#a8a090" stroke-width=".5"/><path d="M51.900 49.500l-6.300 3.600.3 5.600 5.900.2z" fill="#fbe6c8" stroke="#a8a090" stroke-width=".5"/>
<path d="M38.200 58.800l5.900-.1c-.3 5-1.600 9-2.200 13.300-.3 2.500-.3 5-.3 8l-3.200.1c-.3-7.500-.3-14.300-.2-21.300z" fill="#ececec" stroke="#a4a4a4" stroke-width=".5"/><path d="M46 58.700l5.900.1c.1 7 0 13.800-.3 21.300l-3.200-.1c-.2-3-.4-5.500-.8-8-.6-4.300-1.400-8.300-1.600-13.300z" fill="#ececec" stroke="#a4a4a4" stroke-width=".5"/>
<path d="M38.300 80.300c1-1 3-1 3.800.2l1.800 3.300v2.300h-5.700z" fill="#77727a"/><path d="M51.400 80.300c-1-1-3-1-3.800.2l-1.500 3.300v2.300h5.400z" fill="#77727a"/></svg></div>
<div class="lb" style="left:152px;top:498px;letter-spacing:-0.2px">LegNF.png</div>
<div class="th" style="left:292px;top:403px;width:90px;height:90px;"><svg width="90" height="90" viewBox="0 0 90 90"><path d="M43 11.800C47.600 11.800 50.700 14.800 51 20C51.400 28 53 36 55.300 44C56.200 47 56.400 50 55.800 52.500L54.500 54L53.600 51.500L52.300 55L51.100 52L49.500 55.500L48.500 53L46.500 56.200L45.600 55L43.400 60.500L41.500 55.500L40 57L38.600 53.500L37 56L35.600 52.500L34 55.500L32.600 52L31 54.500L29.500 52.500C28.800 50 29.500 46.500 30.600 44C33 36 34.600 28 35 20C35.300 14.800 38.400 11.800 43 11.800z" fill="#f2e596" stroke="#8f8456" stroke-width=".6" stroke-linejoin="round"/><path d="M33 47.500l-.4 4.500M36.200 46.500l-.6 6M39 48l-.4 5.500M50 46.500l1.100 5.500M53.300 46l.3 5.500M47 48l1.500 5" stroke="#b3a86c" stroke-width=".45" fill="none"/></svg></div>
<div class="lb" style="left:273px;top:498px">long.png</div>
<div class="th" style="left:413px;top:403px;width:90px;height:90px;background:#000;"><svg width="90" height="90" viewBox="0 0 90 90"><defs><linearGradient id="lm" x1="0" y1="11.800" x2="0" y2="60.700" gradientUnits="userSpaceOnUse"><stop offset="0" stop-color="#f20a0a"/><stop offset=".22" stop-color="#f40c0c"/><stop offset=".45" stop-color="#f66"/><stop offset=".68" stop-color="#fdeaea"/><stop offset=".75" stop-color="#fff"/><stop offset="1" stop-color="#fff"/></linearGradient></defs><path d="M43 11.800C47.600 11.800 50.700 14.800 51 20C51.400 28 53 36 55.300 44C56.200 47 56.400 50 55.800 52.500L54.500 54L53.600 51.500L52.300 55L51.100 52L49.500 55.500L48.500 53L46.500 56.200L45.600 55L43.400 60.500L41.500 55.500L40 57L38.600 53.500L37 56L35.600 52.500L34 55.500L32.600 52L31 54.500L29.500 52.500C28.800 50 29.500 46.500 30.600 44C33 36 34.600 28 35 20C35.300 14.800 38.400 11.800 43 11.800z" fill="url(#lm)"/></svg></div>
<div class="lb" style="left:394px;top:498px;letter-spacing:0.11px">longMorph.png</div>
<div class="th" style="left:534px;top:403px;width:90px;height:90px;"><svg width="90" height="90" viewBox="0 0 90 90"><rect x="17.200" y="32.800" width="13.800" height="17.600" fill="#666597"/><rect x="58" y="32.800" width="13.200" height="17.600" fill="#666597"/></svg></div>
<div class="lb" style="left:515px;top:498px;letter-spacing:0.13px">sleeve.png</div>
</div>
<!-- ===== details pane ===== -->
<div id="details">
 <svg class="a" style="left:18px;top:2px" width="40" height="48" viewBox="0 0 40 48">
  <defs><filter id="bl"><feGaussianBlur stdDeviation="1.500"/></filter>
   <linearGradient id="df1" x1="0" y1="0" x2="1" y2="0"><stop offset="0" stop-color="#fbf1b8"/><stop offset="1" stop-color="#f0dc8c"/></linearGradient>
   <linearGradient id="df2" x1="0" y1="0" x2="1" y2="0"><stop offset="0" stop-color="#ead27c"/><stop offset=".5" stop-color="#f4e49e"/><stop offset="1" stop-color="#ead380"/></linearGradient>
  </defs>
  <ellipse cx="31" cy="35" rx="8" ry="6" fill="rgba(120,130,150,.16)" filter="url(#bl)"/>
  <path d="M5 2l17 1.500 6 1v30l-6 3-8 1.500z" fill="url(#df2)" stroke="#d8bc5a" stroke-width=".6"/>
  <path d="M3 2.500l9.500 5.500v36.500L3.500 35z" fill="url(#df1)" stroke="#d9bf62" stroke-width=".6"/>
  <path d="M26.500 27.500h2v8.500l-2 1z" fill="#f8f0c0"/>
  <circle cx="27.800" cy="35" r=".7" fill="#7c8a5a"/>
 </svg>
 <div class="a" style="left:80px;top:7px;height:18px;line-height:18px;white-space:nowrap;color:#1e3050;letter-spacing:.25px"><span class="l" style="letter-spacing:-.8px;margin-right:2px">19</span> 個の項目</div>
</div>
<div id="edge"></div>
</div>
</div>
</body>
</html>
